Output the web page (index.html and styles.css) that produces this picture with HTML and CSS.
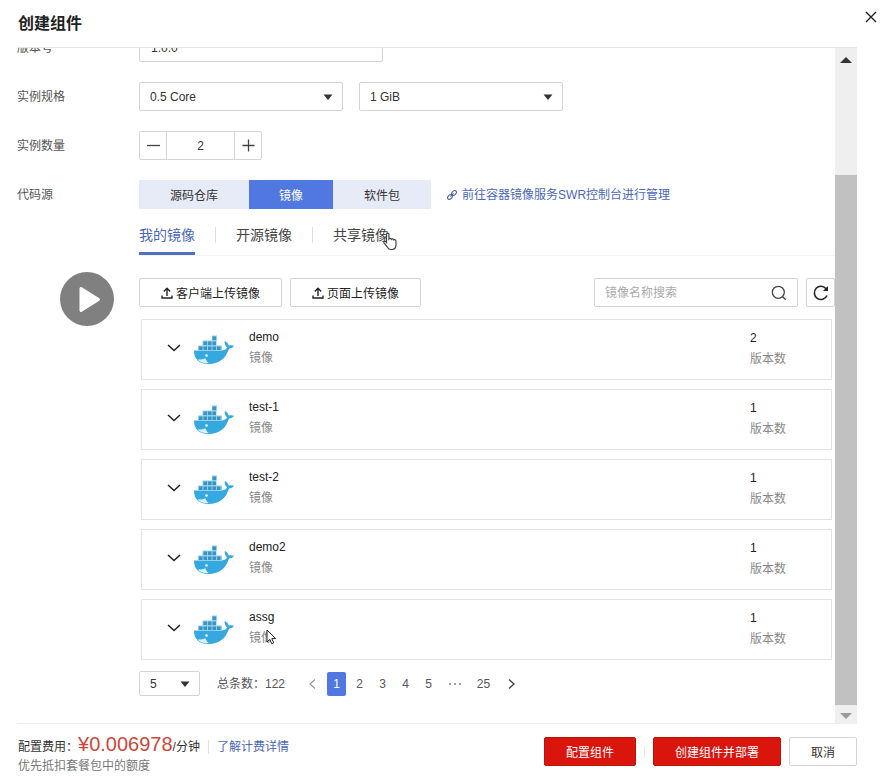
FILE: index.html
```html
<!DOCTYPE html>
<html lang="zh-CN">
<head>
    <meta charset="UTF-8">
    <meta name="viewport" content="width=device-width, initial-scale=1.0">
    <title>创建组件</title>
    <link rel="stylesheet" href="styles.css">
</head>
<body>
    <!-- Shared icons -->
    <svg class="sprite" aria-hidden="true">
        <symbol id="caret" viewBox="0 0 10 6"><path d="M0.5 0.5h9L5 6z" fill="#333"/></symbol>
        <symbol id="chevron" viewBox="0 0 14 8"><path d="M1 1l6 5.5L13 1" fill="none" stroke="#222" stroke-width="1.5"/></symbol>
        <symbol id="upload" viewBox="0 0 12 12"><path d="M1 8.5V11h10V8.5M6 9V1.5M2.8 4.5L6 1.3l3.2 3.2" fill="none" stroke="#222" stroke-width="1.4"/></symbol>
        <symbol id="docker" viewBox="0 0 40 30">
            <path d="M0 15.500h28c2.500-.3 4.300-1.300 5-3.200-1.800-1.500-2.600-3.600-2.200-6.300 2 .8 3.400 2.500 3.900 4.600 1.700-.6 3.600-.6 5.300.2-1 1.800-2.800 2.600-4.900 2.600C33 19 31 22.500 27.500 25c-3.500 2.700-8 4-13 4C5 29 0 24 0 15.500z" fill="#35a8e0"/>
            <path d="M4 10.500h24v5H4zM8.500 5.500h14v5h-14zM18 0.500h5v5h-5z" fill="#8bd0f0"/>
            <g fill="#3a93c0">
                <path d="M5 11.500h3.500v3.500H5zM9.500 11.500H13v3.500H9.500zM14 11.500h3.500v3.500H14zM18.500 11.500H22v3.500h-3.500zM23 11.500h3.500v3.500H23zM9.500 6.500H13V10H9.500zM14 6.500h3.500V10H14zM18.500 6.500H22V10h-3.500zM18.500 1.500H22V5h-3.500z"/>
            </g>
            <path d="M3.500 24.500c3 .2 6-.2 8-1.300.5 1.900 1.500 3.600 3.200 4.900-4.500.3-8.500-.6-11.200-3.600z" fill="#d8f1fb"/>
            <circle cx="12.500" cy="20.500" r="1.300" fill="#fff"/>
        </symbol>
    </svg>

    <div class="dialog">
        <header class="dialog-header">
            <h1>创建组件</h1>
            <button class="close" aria-label="关闭">
                <svg width="12" height="12" viewBox="0 0 12 12"><path d="M1 1l10 10M11 1L1 11" stroke="#222" stroke-width="1.400"/></svg>
            </button>
        </header>

        <main class="dialog-body">
            <form class="form">
                <div class="row">
                    <label for="version">版本号</label>
                    <input class="box version" type="text" id="version" value="1.0.0">
                </div>

                <div class="row">
                    <label for="cpu">实例规格</label>
                    <div class="controls">
                        <div class="select">
                            <select class="box" id="cpu"><option>0.5 Core</option></select>
                            <svg class="caret"><use href="#caret"/></svg>
                        </div>
                        <div class="select">
                            <select class="box" aria-label="内存"><option>1 GiB</option></select>
                            <svg class="caret"><use href="#caret"/></svg>
                        </div>
                    </div>
                </div>

                <div class="row">
                    <label for="count">实例数量</label>
                    <div class="box stepper">
                        <button type="button" aria-label="减少"><svg width="13" height="13" viewBox="0 0 13 13"><path d="M0 6.500h13" stroke="#444" stroke-width="1.300"/></svg></button>
                        <input type="text" id="count" value="2">
                        <button type="button" aria-label="增加"><svg width="13" height="13" viewBox="0 0 13 13"><path d="M0.500 6.500h12M6.500 0.500v12" stroke="#444" stroke-width="1.300"/></svg></button>
                    </div>
                </div>

                <div class="row">
                    <span class="label">代码源</span>
                    <div class="source">
                        <div class="source-head">
                            <div class="segment">
                                <button type="button">源码仓库</button>
                                <button type="button" class="active">镜像</button>
                                <button type="button">软件包</button>
                            </div>
                            <a class="link" href="#">
                                <svg width="10" height="10" viewBox="0 0 10 10" fill="none" stroke="#4a68b8" stroke-width="1.100"><ellipse cx="3" cy="7" rx="2.800" ry="1.900" transform="rotate(-45 3 7)"/><ellipse cx="7" cy="3" rx="2.800" ry="1.900" transform="rotate(-45 7 3)"/><path d="M3.500 6.500l3-3"/></svg>
                                前往容器镜像服务SWR控制台进行管理
                            </a>
                        </div>

                        <nav class="tabs">
                            <a href="#" class="active">我的镜像</a>
                            <a href="#">开源镜像</a>
                            <a href="#">共享镜像
                                <svg class="hand" width="15" height="19" viewBox="0 0 15 19"><path d="M3.500 10.500V2.300c0-1.700 2.400-1.700 2.400 0V7c.5-.8 2-.8 2.400.3.700-.7 2-.5 2.300.6.900-.6 2.400-.1 2.400 1.300v3.600c0 2.500-1.500 4.700-4 4.700H8c-1.800 0-2.700-.9-3.600-2.300L1 10.800c-.7-1.200.7-2.200 1.600-1.300z" fill="#fff" stroke="#444" stroke-width="1.200"/></svg>
                            </a>
                        </nav>

                        <div class="toolbar">
                            <button type="button" class="box"><svg width="12" height="12"><use href="#upload"/></svg>客户端上传镜像</button>
                            <button type="button" class="box"><svg width="12" height="12"><use href="#upload"/></svg>页面上传镜像</button>
                            <div class="box search">
                                <input type="text" placeholder="镜像名称搜索" aria-label="镜像名称搜索">
                                <svg width="16" height="16" viewBox="0 0 16 16" fill="none" stroke="#444" stroke-width="1.300"><circle cx="7.300" cy="7.300" r="6"/><path d="M11.700 11.700l3 3"/></svg>
                            </div>
                            <button type="button" class="box refresh" aria-label="刷新"><svg width="16" height="16" viewBox="0 0 16 16"><path d="M13.300 4A6.600 6.600 0 1 0 14 10.500" fill="none" stroke="#222" stroke-width="1.600"/><path d="M15 1v5h-5z" fill="#222"/></svg></button>
                        </div>

                        <ul class="images">
                            <li>
                                <svg class="chevron"><use href="#chevron"/></svg>
                                <svg class="docker"><use href="#docker"/></svg>
                                <div class="name">demo<span>镜像</span></div>
                                <div class="versions">2<span>版本数</span></div>
                            </li>
                            <li>
                                <svg class="chevron"><use href="#chevron"/></svg>
                                <svg class="docker"><use href="#docker"/></svg>
                                <div class="name">test-1<span>镜像</span></div>
                                <div class="versions">1<span>版本数</span></div>
                            </li>
                            <li>
                                <svg class="chevron"><use href="#chevron"/></svg>
                                <svg class="docker"><use href="#docker"/></svg>
                                <div class="name">test-2<span>镜像</span></div>
                                <div class="versions">1<span>版本数</span></div>
                            </li>
                            <li>
                                <svg class="chevron"><use href="#chevron"/></svg>
                                <svg class="docker"><use href="#docker"/></svg>
                                <div class="name">demo2<span>镜像</span></div>
                                <div class="versions">1<span>版本数</span></div>
                            </li>
                            <li>
                                <svg class="chevron"><use href="#chevron"/></svg>
                                <svg class="docker"><use href="#docker"/></svg>
                                <div class="name">assg<span>镜像</span>
                                    <svg class="pointer" width="11" height="16" viewBox="0 0 11 16"><path d="M1 1v12l2.800-2.600 1.900 4.300 2-.9-1.900-4.200h3.900z" fill="#fff" stroke="#222"/></svg>
                                </div>
                                <div class="versions">1<span>版本数</span></div>
                            </li>
                        </ul>

                        <div class="pager">
                            <div class="select page-size">
                                <select class="box" aria-label="每页条数"><option>5</option></select>
                                <svg class="caret"><use href="#caret"/></svg>
                            </div>
                            <span class="total">总条数：122</span>
                            <div class="pages">
                                <button type="button" class="arrow" aria-label="上一页"><svg width="7" height="10" viewBox="0 0 7 10"><path d="M6 0.500L1 5l5 4.500" fill="none" stroke="#999" stroke-width="1.200"/></svg></button>
                                <button type="button" class="active">1</button>
                                <button type="button">2</button>
                                <button type="button">3</button>
                                <button type="button">4</button>
                                <button type="button">5</button>
                                <span class="wide"><svg width="12" height="2" viewBox="0 0 12 2" fill="#777"><circle cx="1" cy="1" r="0.900"/><circle cx="6" cy="1" r="0.900"/><circle cx="11" cy="1" r="0.900"/></svg></span>
                                <button type="button" class="wide">25</button>
                                <button type="button" class="arrow" aria-label="下一页"><svg width="7" height="10" viewBox="0 0 7 10"><path d="M1 0.500L6 5 1 9.500" fill="none" stroke="#444" stroke-width="1.400"/></svg></button>
                            </div>
                        </div>
                    </div>
                </div>
            </form>

            <div class="scrollbar" aria-hidden="true">
                <svg width="12" height="6" viewBox="0 0 12 6"><path d="M0 6l6-6 6 6z" fill="#333"/></svg>
                <div class="thumb"></div>
                <svg width="12" height="6" viewBox="0 0 12 6"><path d="M0 0l6 6 6-6z" fill="#999"/></svg>
            </div>
        </main>

        <footer class="dialog-footer">
            <div class="cost">
                <p>配置费用：<strong>¥0.006978</strong>/分钟<a class="link" href="#">了解计费详情</a></p>
                <p class="hint">优先抵扣套餐包中的额度</p>
            </div>
            <div class="actions">
                <button class="primary">配置组件</button>
                <i class="divider"></i>
                <button class="primary">创建组件并部署</button>
                <button class="box">取消</button>
            </div>
        </footer>
    </div>

    <button class="play" aria-label="播放">
        <svg width="54" height="54" viewBox="0 0 54 54"><circle cx="27" cy="27" r="27" fill="#808080"/><path d="M21 16.500l17.500 11L21 38.500z" fill="#fff" stroke="#fff" stroke-width="3" stroke-linejoin="round"/></svg>
    </button>
</body>
</html>
```
FILE: styles.css
```css
/* General Reset */
* {
    margin: 0;
    padding: 0;
    box-sizing: border-box;
}

body,
button,
input,
select {
    font-family: "Liberation Sans", "Noto Sans CJK SC", sans-serif;
    font-size: 12px;
    color: #333;
}

body {
    background: #fff;
    line-height: 18px;
}

button {
    border: none;
    background: none;
    cursor: pointer;
}

a {
    text-decoration: none;
}

svg {
    display: block;
    flex: none;
}

.sprite {
    position: absolute;
    width: 0;
    height: 0;
}

.box {
    height: 29px;
    border: 1px solid #d4d4d4;
    border-radius: 2px;
    background: #fff;
}

.link {
    color: #4a68b8;
}

/* Dialog */
.dialog {
    display: flex;
    flex-direction: column;
    height: 100vh;
}

.dialog-header {
    display: flex;
    justify-content: space-between;
    align-items: flex-start;
    height: 47px;
    padding: 11px 18px 0 18px;
}

.dialog-header h1 {
    font-size: 16px;
    line-height: 26px;
    color: #222;
}

.close {
    padding: 0 1px;
}

.dialog-body {
    flex: 1;
    min-height: 0;
    display: flex;
    margin: 0 39px 0 17px;
    border-top: 1px solid #e6e6e6;
    overflow: hidden;
}

/* Form */
.form {
    flex: 1;
    display: flex;
    flex-direction: column;
    gap: 20px;
    margin-top: -15px;
}

.row {
    display: grid;
    grid-template-columns: 122px 1fr;
    align-items: start;
}

.row label,
.row .label {
    padding-top: 2px;
    line-height: 27px;
    color: #555;
}

.controls {
    display: flex;
    gap: 16px;
}

.version {
    width: 244px;
    padding: 0 11px;
}

.select {
    position: relative;
    width: 204px;
}

.select select {
    appearance: none;
    display: block;
    width: 100%;
    padding: 0 10px;
}

.caret {
    position: absolute;
    right: 10px;
    top: 50%;
    width: 10px;
    height: 6px;
    margin-top: -3px;
    pointer-events: none;
}

.stepper {
    display: flex;
    width: 123px;
}

.stepper button {
    display: flex;
    align-items: center;
    justify-content: center;
    width: 26px;
}

.stepper input {
    flex: 1;
    min-width: 0;
    border: solid #d4d4d4;
    border-width: 0 1px;
    text-align: center;
}

/* Code source */
.source-head {
    display: flex;
    align-items: center;
    gap: 16px;
}

.source-head .link {
    display: flex;
    align-items: center;
    gap: 5px;
}

.segment {
    display: flex;
}

.segment button {
    height: 29px;
    padding: 0 31px;
    background: #e6ebf7;
}

.segment .active {
    padding: 0 30px;
    background: #5078e0;
    color: #fff;
}

.tabs {
    display: flex;
    align-items: center;
    height: 41px;
    margin-top: 6px;
    border-bottom: 1px solid #f3f3f3;
}

.tabs a {
    position: relative;
    line-height: 40px;
    font-size: 14px;
    color: #444;
}

.tabs a + a {
    margin-left: 41px;
}

.tabs a + a::before {
    content: "";
    position: absolute;
    left: -21px;
    top: 12px;
    width: 1px;
    height: 16px;
    background: #ddd;
}

.tabs .active {
    color: #4a68b8;
    box-shadow: inset 0 -3px #5470c0;
}

.hand {
    position: absolute;
    left: 50px;
    top: 17px;
}

/* Toolbar */
.toolbar {
    display: flex;
    gap: 8px;
    margin-top: 22px;
}

.toolbar button {
    display: flex;
    align-items: center;
    justify-content: center;
    gap: 3px;
    padding: 0 21px;
    color: #222;
}

.toolbar .search {
    display: flex;
    align-items: center;
    width: 204px;
    margin-left: auto;
    padding: 0 10px;
}

.search input {
    flex: 1;
    min-width: 0;
    border: none;
    outline: none;
}

.search input::placeholder {
    color: #aaa;
}

.toolbar .refresh {
    width: 29px;
    padding: 0;
}

/* Image list */
.images {
    display: flex;
    flex-direction: column;
    gap: 9px;
    margin: 12px 3px 0 2px;
    list-style: none;
}

.images li {
    display: flex;
    height: 61px;
    padding: 7px 0 0 25px;
    border: 1px solid #e2e2e2;
}

.chevron {
    width: 14px;
    height: 8px;
    margin-top: 17px;
}

.docker {
    width: 40px;
    height: 30px;
    margin: 8px 15px 0 13px;
}

.name,
.versions {
    position: relative;
    line-height: 21px;
    color: #222;
}

.name span,
.versions span {
    display: block;
    color: #888;
}

.versions {
    width: 81px;
    margin-left: auto;
    padding-top: 1px;
}

.pointer {
    position: absolute;
    left: 17px;
    top: 22px;
}

/* Pager */
.pager {
    display: flex;
    align-items: center;
    margin-top: 11px;
    color: #555;
}

.page-size {
    width: 61px;
}

.page-size .box {
    height: 25px;
}

.total {
    margin: 0 16px 0 17px;
}

.pages {
    display: flex;
    gap: 4px;
}

.pages button,
.pages span {
    display: flex;
    align-items: center;
    justify-content: center;
    width: 19px;
    height: 24px;
    color: #555;
}

.pages .wide {
    width: 25px;
}

.pages .arrow {
    width: 22px;
}

.pages .active {
    border-radius: 2px;
    background: #5078e0;
    color: #fff;
}

/* Scrollbar */
.scrollbar {
    display: flex;
    flex-direction: column;
    align-items: center;
    width: 22px;
    padding: 9px 0 4px;
    background: #efefef;
}

.thumb {
    width: 100%;
    height: 80%;
    margin: auto 0 8px;
    background: #c1c1c1;
}

/* Footer */
.dialog-footer {
    display: flex;
    justify-content: space-between;
    align-items: flex-start;
    height: 54px;
    margin: 0 39px 0 17px;
    padding-top: 10px;
    border-top: 1px solid #eee;
}

.cost {
    padding-left: 1px;
    line-height: 20px;
}

.cost strong {
    font-size: 20px;
    font-weight: normal;
    color: #c9483c;
}

.cost .link {
    margin-left: 8px;
    padding-left: 8px;
    border-left: 1px solid #e2e2e2;
}

.cost .hint {
    line-height: 18px;
    color: #777;
}

.actions {
    display: flex;
    align-items: center;
    gap: 8px;
    margin-top: 3px;
}

.actions button {
    height: 29px;
    padding: 0 21px;
}

.actions .primary {
    border: 1px solid #b8150c;
    border-radius: 2px;
    background: #d9150c;
    color: #fff;
}

.divider {
    width: 1px;
    height: 12px;
    background: #e2e2e2;
}

/* Play overlay */
.play {
    position: absolute;
    left: 60px;
    top: 272px;
}
```
